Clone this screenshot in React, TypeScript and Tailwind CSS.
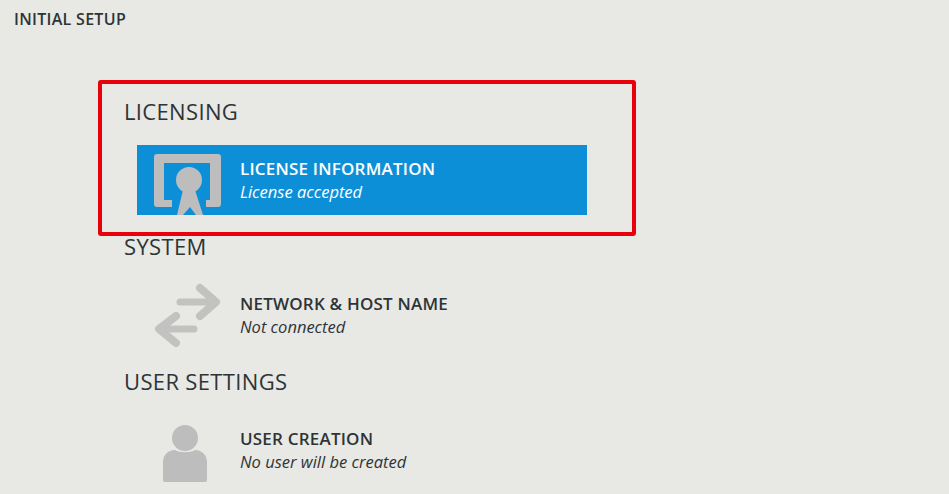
import React from "react";

const font = { fontFamily: '"Open Sans", "Noto Sans", sans-serif' };

const LicenseIcon: React.FC = () => (
  <svg viewBox="0 0 67 70" className="w-[67px] h-[70px]" fill="#bdbdbd">
    <path d="M3 9h61a3 3 0 0 1 3 3v47a3 3 0 0 1-3 3H52v-7h4V18H10v37h8v7H3a3 3 0 0 1-3-3V12a3 3 0 0 1 3-3Z" />
    <circle cx="35" cy="35" r="13" />
    <path d="M29 45h12l8 25h-7l-6-8-7 8h-6Z" />
  </svg>
);

const NetworkIcon: React.FC = () => (
  <svg viewBox="0 0 67 70" className="w-[67px] h-[70px]" fill="none" stroke="#c2c2c0" strokeWidth="7" strokeLinejoin="round" strokeLinecap="round">
    <path d="M26 22h34" />
    <path d="M46 8l16 14-16 14" strokeWidth="8" />
    <path d="M40 49H8" />
    <path d="M22 36L5 49l17 14" strokeWidth="8" />
  </svg>
);

const UserIcon: React.FC = () => (
  <svg viewBox="0 0 67 70" className="w-[67px] h-[70px]" fill="#bdbdbd">
    <circle cx="31" cy="23" r="13" />
    <path d="M11 67a2 2 0 0 1-2-2V47c0-7 5-12 12-12 4 3 16 3 20 0 7 0 12 5 12 12v18a2 2 0 0 1-2 2Z" />
  </svg>
);

interface SpokeProps {
  icon: React.ReactNode;
  title: string;
  status: string;
  selected?: boolean;
}

const Spoke: React.FC<SpokeProps> = ({ icon, title, status, selected }) => (
  <div className={`ml-[13px] w-[450px] h-[70px] flex items-center ${selected ? "bg-[#0d8fd8] text-white" : "text-[#2e3436]"}`}>
    <div className="ml-[17px] w-[67px] h-[70px] shrink-0 overflow-hidden">{icon}</div>
    <div className="ml-[19px] flex flex-col">
      <span className="text-[17px] leading-[23px] font-semibold tracking-[0.2px] whitespace-nowrap">{title}</span>
      <span className="text-[16.5px] leading-[23px] italic whitespace-nowrap">{status}</span>
    </div>
  </div>
);

const Heading: React.FC<{ children: React.ReactNode }> = ({ children }) => (
  <h2 className="text-[22px] leading-[26px] text-[#2e3436] tracking-[0.35px] whitespace-nowrap">{children}</h2>
);

export default function App() {
  return (
    <div className="relative w-[949px] h-[494px] overflow-hidden bg-[#e8e8e5]" style={font}>
      <div className="pt-[9px] pl-[14px] text-[16px] leading-[20px] font-semibold text-[#2e3436] tracking-[0.3px]">INITIAL SETUP</div>
      <div className="pl-[124px] pt-[69px] flex flex-col">
        <Heading>LICENSING</Heading>
        <div className="mt-[21px]">
          <Spoke icon={<LicenseIcon />} title="LICENSE INFORMATION" status="License accepted" selected />
        </div>
        <div className="mt-[18px]"><Heading>SYSTEM</Heading></div>
        <div className="mt-[21px]">
          <Spoke icon={<NetworkIcon />} title="NETWORK & HOST NAME" status="Not connected" />
        </div>
        <div className="mt-[18px]"><Heading>USER SETTINGS</Heading></div>
        <div className="mt-[21px]">
          <Spoke icon={<UserIcon />} title="USER CREATION" status="No user will be created" />
        </div>
      </div>
      {/* red annotation box drawn over the screenshot */}
      <div className="absolute left-[98px] top-[80px] w-[538px] h-[156px] border-[4px] border-[#e8000b] rounded-[3px]" />
    </div>
  );
}
